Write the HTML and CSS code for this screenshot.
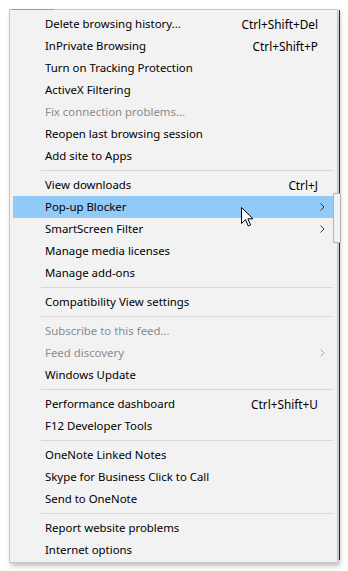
FILE: index.html
```html
<!DOCTYPE html>
<html>
<head>
<meta charset="utf-8">
<link rel="stylesheet" href="styles.css">
</head>
<body>
<div class="screen">
  <div class="menu">
    <div class="topmark"></div>
    <div class="item"><span class="label">Delete browsing history...</span><span class="key">Ctrl+Shift+Del</span></div>
    <div class="item"><span class="label">InPrivate Browsing</span><span class="key">Ctrl+Shift+P</span></div>
    <div class="item"><span class="label">Turn on Tracking Protection</span></div>
    <div class="item"><span class="label">ActiveX Filtering</span></div>
    <div class="item disabled"><span class="label">Fix connection problems...</span></div>
    <div class="item"><span class="label">Reopen last browsing session</span></div>
    <div class="item"><span class="label">Add site to Apps</span></div>
    <div class="sep"></div>
    <div class="item"><span class="label">View downloads</span><span class="key">Ctrl+J</span></div>
    <div class="item hover"><span class="label">Pop-up Blocker</span><svg class="chev" width="5" height="8" viewBox="0 0 5 8"><path d="M0.5 0.5 L4 4 L0.5 7.5" fill="none" stroke="#333" stroke-width="1"/></svg>
      <svg class="cursor" width="13" height="20" viewBox="0 0 13 20"><path d="M0.5 0.5 L0.5 16.5 L4.5 12.7 L7.3 19 L9.6 18 L6.9 11.8 L12 11.8 Z" fill="#fff" stroke="#000" stroke-width="1" stroke-linejoin="miter"/></svg>
    </div>
    <div class="item"><span class="label">SmartScreen Filter</span><svg class="chev" width="5" height="8" viewBox="0 0 5 8"><path d="M0.5 0.5 L4 4 L0.5 7.5" fill="none" stroke="#333" stroke-width="1"/></svg></div>
    <div class="item"><span class="label">Manage media licenses</span></div>
    <div class="item"><span class="label">Manage add-ons</span></div>
    <div class="sep"></div>
    <div class="item"><span class="label">Compatibility View settings</span></div>
    <div class="sep"></div>
    <div class="item disabled"><span class="label">Subscribe to this feed...</span></div>
    <div class="item disabled"><span class="label">Feed discovery</span><svg class="chev" width="5" height="8" viewBox="0 0 5 8"><path d="M0.5 0.5 L4 4 L0.5 7.5" fill="none" stroke="#a8a8a8" stroke-width="1"/></svg></div>
    <div class="item"><span class="label">Windows Update</span></div>
    <div class="sep"></div>
    <div class="item"><span class="label">Performance dashboard</span><span class="key">Ctrl+Shift+U</span></div>
    <div class="item"><span class="label">F12 Developer Tools</span></div>
    <div class="sep"></div>
    <div class="item"><span class="label">OneNote Linked Notes</span></div>
    <div class="item"><span class="label">Skype for Business Click to Call</span></div>
    <div class="item"><span class="label">Send to OneNote</span></div>
    <div class="sep"></div>
    <div class="item"><span class="label">Report website problems</span></div>
    <div class="item"><span class="label">Internet options</span></div>
    <div class="subtab"></div>
  </div>
  <div class="edge"></div>
</div>
</body>
</html>
```

FILE: styles.css
```css
html, body {
  margin: 0;
  padding: 0;
  background: #ffffff;
}
body {
  width: 348px;
  height: 571px;
  overflow: hidden;
  font-family: "Noto Sans", "Open Sans", sans-serif;
  font-size: 11.4px;
  color: #000;
}
.screen {
  display: flex;
  align-items: flex-start;
  padding: 9px 0 0 9px;
}
.menu {
  position: relative;
  background: #f2f2f2;
  border: 1px solid #c6c6c6;
  padding: 3px 4px 1px 3px;
  box-sizing: content-box;
  width: 320px;
  box-shadow: 2px 3px 5px rgba(0, 0, 0, 0.25);
}
.topmark {
  position: absolute;
  top: -1px;
  left: 1px;
  width: 43px;
  height: 1px;
  background: #7ea6cf;
}
.item {
  position: relative;
  height: 22px;
  display: flex;
  align-items: center;
  padding: 0 15px 0 32px;
  white-space: nowrap;
}
.label {
  flex: 1;
  line-height: 22px;
}
.key {
  line-height: 22px;
  font-size: 11.8px;
}
.item.disabled {
  color: #8b8b8b;
}
.item.hover {
  background: #91c9f7;
}
.chev {
  position: absolute;
  right: 8px;
  top: 7px;
}
.cursor {
  position: absolute;
  left: 228px;
  top: 11px;
}
.sep {
  height: 1px;
  background: #d7d7d7;
  margin: 3px 0 3px 28px;
}
.subtab {
  position: absolute;
  left: 323px;
  top: 183px;
  width: 6px;
  height: 48px;
  background: #f2f2f2;
  border: 1px solid #b4b4b4;
}
.edge {
  width: 1px;
  height: 550px;
  margin-left: 1px;
  margin-top: 1px;
  background: #2b2b2b;
}
```
